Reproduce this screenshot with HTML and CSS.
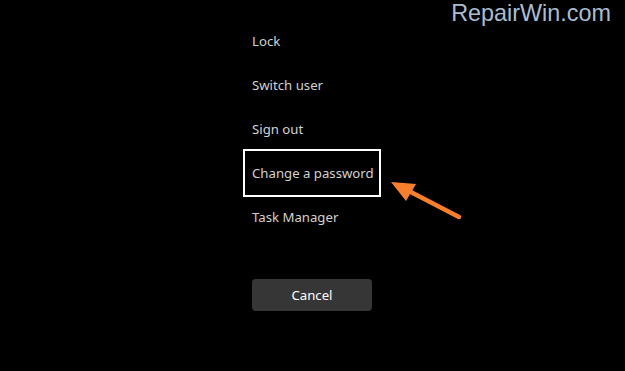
FILE: index.html
```html
<!DOCTYPE html>
<html>
<head>
<meta charset="utf-8">
<link rel="stylesheet" href="styles.css">
</head>
<body>
<div class="screen">
  <div class="watermark">RepairWin.com</div>
  <div class="panel">
    <ul class="menu">
      <li class="item">Lock</li>
      <li class="item">Switch user</li>
      <li class="item">Sign out</li>
      <li class="item focused">Change a password</li>
      <li class="item">Task Manager</li>
    </ul>
    <button class="cancel">Cancel</button>
  </div>
  <svg class="arrow" width="625" height="371" viewBox="0 0 625 371">
    <line x1="459" y1="217" x2="405" y2="189" stroke="#fb7f2a" stroke-width="4.5" stroke-linecap="round"/>
    <polygon points="391,182 416,184 406,201" fill="#fb7f2a"/>
  </svg>
</div>
</body>
</html>
```
FILE: styles.css
```css
html, body {
  margin: 0;
  padding: 0;
  background: #000;
}
.screen {
  position: relative;
  width: 625px;
  height: 371px;
  overflow: hidden;
  background: #000;
  font-family: "Noto Sans", "Open Sans", sans-serif;
}
.watermark {
  position: absolute;
  top: 0;
  right: 14px;
  font-family: "Liberation Sans", Arial, sans-serif;
  font-size: 23.4px;
  line-height: 27px;
  color: #a9bdd1;
}
.panel {
  display: flex;
  flex-direction: column;
  align-items: flex-start;
  padding: 19px 0 0 245px;
}
.menu {
  list-style: none;
  margin: 0;
  padding: 0;
  display: flex;
  flex-direction: column;
}
.item {
  width: 127px;
  height: 44px;
  padding-left: 7px;
  display: flex;
  align-items: center;
  font-size: 13.2px;
  color: #d2d2d2;
}
.focused {
  outline: 2px solid #fff;
}
.cancel {
  margin: 40px 0 0 7px;
  width: 120px;
  height: 32px;
  border: none;
  border-radius: 4px;
  background: #363636;
  color: #fff;
  font-family: "Noto Sans", "Open Sans", sans-serif;
  font-size: 13.2px;
  padding: 0;
}
.arrow {
  position: absolute;
  left: 0;
  top: 0;
  pointer-events: none;
}
```
